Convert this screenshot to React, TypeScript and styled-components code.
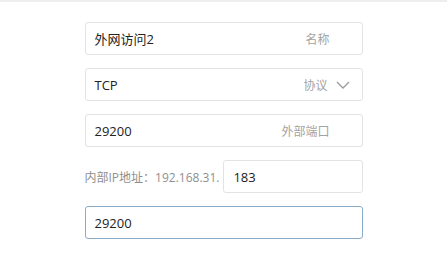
import React from 'react';
import styled, { createGlobalStyle } from 'styled-components';

const GlobalStyle = createGlobalStyle`
  html, body {
    margin: 0;
    padding: 0;
    background: #ffffff;
  }
  body {
    font-family: 'Open Sans', 'Noto Sans CJK SC', sans-serif;
  }
`;

const Page = styled.div`
  width: 447px;
  height: 266px;
  box-sizing: border-box;
  border-top: 2px solid #eeeeee;
  background: #ffffff;
  display: flex;
  justify-content: center;
`;

const Form = styled.div`
  width: 278px;
  padding-top: 20px;
  display: flex;
  flex-direction: column;
  gap: 13px;
`;

const Field = styled.div<{ $active?: boolean; $grow?: boolean }>`
  box-sizing: border-box;
  height: 33px;
  ${({ $grow }) => ($grow ? 'flex: 1;' : 'width: 100%;')}
  border: 1px solid ${({ $active }) => ($active ? '#8aaccb' : '#e3e3e3')};
  border-radius: 3px;
  background: #ffffff;
  display: flex;
  align-items: center;
  padding: 0 10px 0 9px;
`;

const Value = styled.span`
  flex: 1;
  font-size: 13px;
  color: #222222;
`;

const Hint = styled.span`
  font-size: 12px;
  color: #a3a3a3;
  margin-right: 22px;
`;

const SelectHint = styled(Hint)`
  margin-right: 8px;
`;

const Row = styled.div`
  display: flex;
  align-items: center;
  gap: 4px;
`;

const Prefix = styled.span`
  font-size: 12px;
  color: #8f8f8f;
  white-space: nowrap;
`;

const Chevron = () => (
  <svg width="14" height="8" viewBox="0 0 14 8" style={{ marginRight: 2 }}>
    <path d="M1 1 L7 7 L13 1" fill="none" stroke="#9a9a9a" strokeWidth="1.3" />
  </svg>
);

export default function App() {
  return (
    <>
      <GlobalStyle />
      <Page>
        <Form>
          <Field>
            <Value>外网访问2</Value>
            <Hint>名称</Hint>
          </Field>
          <Field>
            <Value>TCP</Value>
            <SelectHint>协议</SelectHint>
            <Chevron />
          </Field>
          <Field>
            <Value>29200</Value>
            <Hint>外部端口</Hint>
          </Field>
          <Row>
            <Prefix>内部IP地址：192.168.31.</Prefix>
            <Field $grow>
              <Value>183</Value>
            </Field>
          </Row>
          <Field $active>
            <Value>29200</Value>
          </Field>
        </Form>
      </Page>
    </>
  );
}
